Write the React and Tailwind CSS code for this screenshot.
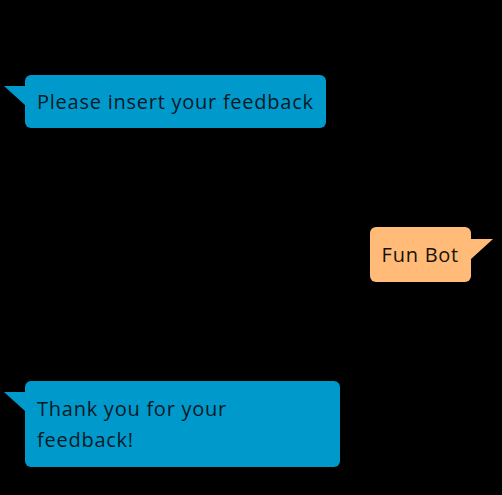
export default function App() {
  const font = { fontFamily: '"Open Sans", "Noto Sans", sans-serif' };
  return (
    <div className="w-[502px] h-[495px] bg-black overflow-hidden flex flex-col pt-[75px] gap-[99px]" style={font}>
      <div className="flex items-start">
        <div className="w-0 h-0 ml-[4px] mt-[11px] border-t-[19px] border-t-[#0099cc] border-l-[21px] border-l-transparent" />
        <div className="bg-[#0099cc] rounded-[6px] px-[12px] py-[11px] text-[20px] tracking-[0.75px] leading-[31px] text-[#061a26]">
          Please insert your feedback
        </div>
      </div>
      <div className="flex items-start justify-end pr-[9px]">
        <div className="bg-[#ffbb77] rounded-[6px] px-[12px] py-[12px] text-[20px] tracking-[0.75px] leading-[31px] text-[#1a1208]">
          Fun Bot
        </div>
        <div className="w-0 h-0 mt-[12px] border-t-[20px] border-t-[#ffbb77] border-r-[22px] border-r-transparent" />
      </div>
      <div className="flex items-start">
        <div className="w-0 h-0 ml-[4px] mt-[11px] border-t-[19px] border-t-[#0099cc] border-l-[21px] border-l-transparent" />
        <div className="bg-[#0099cc] rounded-[6px] px-[12px] py-[12px] w-[315px] text-[20px] tracking-[0.75px] leading-[31px] text-[#061a26]">
          Thank you for your<br />feedback!
        </div>
      </div>
    </div>
  );
}
